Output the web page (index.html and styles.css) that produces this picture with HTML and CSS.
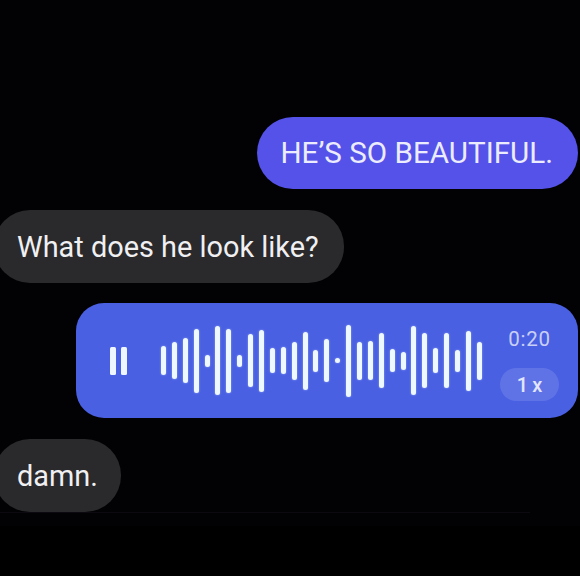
FILE: index.html
```html
<!DOCTYPE html>
<html lang="en">
<head>
<meta charset="utf-8">
<title>Chat</title>
<link rel="stylesheet" href="styles.css">
</head>
<body>
<div class="screen">
  <div class="thread">
    <div class="row row-out">
      <div class="bubble bubble-out">HE’S SO BEAUTIFUL.</div>
    </div>
    <div class="row row-in">
      <div class="bubble bubble-in">What does he look like?</div>
    </div>
    <div class="row row-out">
      <div class="voice">
        <div class="pause"><span></span><span></span></div>
        <div class="wave">
          <i style="height:29px"></i><i style="height:37px"></i><i style="height:45px"></i><i style="height:64px"></i><i style="height:12px"></i><i style="height:69px"></i><i style="height:64px"></i><i style="height:12px"></i><i style="height:53px"></i><i style="height:62px"></i><i style="height:25px"></i><i style="height:27px"></i><i style="height:38px"></i><i style="height:58px"></i><i style="height:22px"></i><i style="height:43px"></i><i style="height:5px"></i><i style="height:72px"></i><i style="height:38px"></i><i style="height:39px"></i><i style="height:55px"></i><i style="height:23px"></i><i style="height:18px"></i><i style="height:69px"></i><i style="height:55px"></i><i style="height:25px"></i><i style="height:55px"></i><i style="height:22px"></i><i style="height:60px"></i><i style="height:38px"></i>
        </div>
        <div class="meta">
          <div class="time">0:20</div>
          <div class="speed">1 x</div>
        </div>
      </div>
    </div>
    <div class="row row-in">
      <div class="bubble bubble-in bubble-short">damn.</div>
    </div>
  </div>
  <div class="composer-line"></div>
</div>
</body>
</html>
```

FILE: styles.css
```css
html, body {
  margin: 0;
  padding: 0;
  background: #000;
}

body {
  width: 580px;
  height: 576px;
  overflow: hidden;
  font-family: Roboto, "Liberation Sans", sans-serif;
  color: #f2f2f6;
}

.screen {
  width: 580px;
  height: 526px;
  background: #020103;
  box-sizing: border-box;
  padding-top: 117px;
  position: relative;
}

.thread {
  display: flex;
  flex-direction: column;
  gap: 21px;
}

.row {
  display: flex;
}

.row-out {
  justify-content: flex-end;
  padding-right: 2px;
}

.row-in {
  justify-content: flex-start;
  margin-left: -6px;
}

.bubble {
  height: 72px;
  border-radius: 36px;
  display: flex;
  align-items: center;
  box-sizing: border-box;
  white-space: nowrap;
}

.bubble-out {
  background: #5452e8;
  color: #ececff;
  font-size: 29.6px;
  padding: 0 25px 0 23px;
}

.bubble-in {
  background: #2a292c;
  color: #f0f0f2;
  height: 73px;
  font-size: 28.9px;
  padding: 0 25px 0 23px;
}

.bubble-short {
  padding-right: 23px;
}

.voice {
  width: 502px;
  height: 115px;
  border-radius: 28px;
  background: #4a60e3;
  display: flex;
  align-items: center;
  padding: 0 19px 0 34px;
  box-sizing: border-box;
  margin-top: -1px;
}

.pause {
  display: flex;
  gap: 5px;
  flex: none;
}

.pause span {
  width: 6px;
  height: 28px;
  border-radius: 1.5px;
  background: #eef7ff;
}

.wave {
  display: flex;
  align-items: center;
  gap: 5.9px;
  margin-left: 34px;
  height: 80px;
  flex: none;
}

.wave i {
  display: block;
  width: 5px;
  border-radius: 2.5px;
  background: #eef8ff;
  box-shadow: 0 0 2px rgba(220, 240, 255, 0.55);
}

.meta {
  margin-left: auto;
  width: 59px;
  display: flex;
  flex-direction: column;
  align-items: center;
  gap: 17px;
  padding-top: 8px;
}

.time {
  font-size: 20.5px;
  line-height: 23px;
  letter-spacing: 0.8px;
  color: #c9cff6;
}

.speed {
  width: 59px;
  height: 33px;
  border-radius: 16.5px;
  background: rgba(255, 255, 255, 0.12);
  display: flex;
  align-items: center;
  justify-content: center;
  font-size: 20px;
  font-weight: 500;
  color: #e2e6ff;
  word-spacing: -1px;
}

.composer-line {
  position: absolute;
  left: 0;
  top: 512px;
  width: 530px;
  height: 1px;
  background: #0c0a10;
}
```
